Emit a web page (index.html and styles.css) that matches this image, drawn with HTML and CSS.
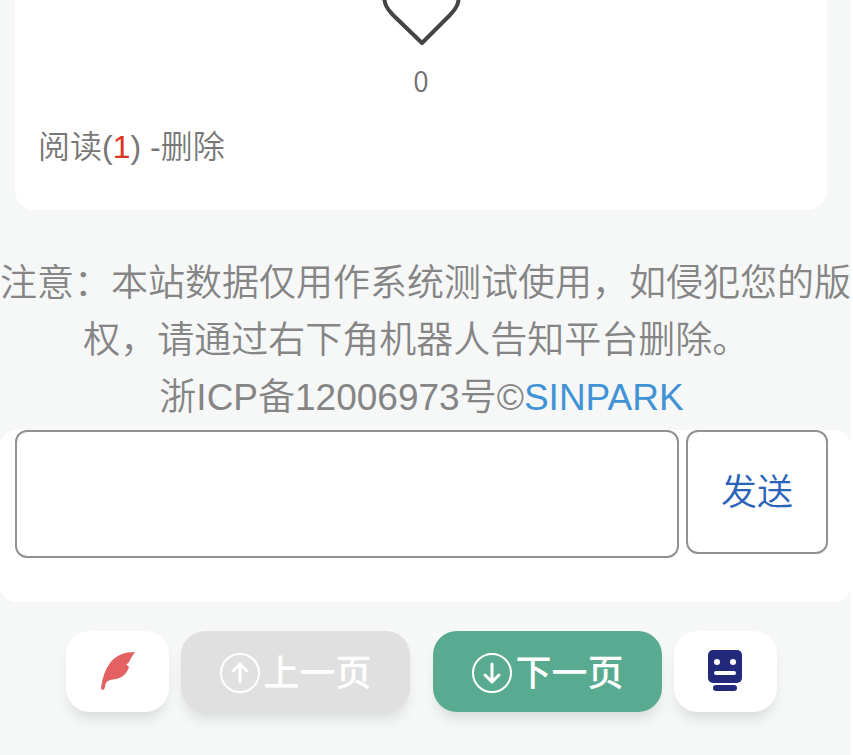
FILE: index.html
```html
<!DOCTYPE html>
<html lang="zh-CN">
<head>
    <meta charset="UTF-8">
    <meta name="viewport" content="width=device-width, initial-scale=1">
    <title>SINPARK</title>
    <link rel="stylesheet" href="styles.css">
</head>
<body>
    <div class="page">
        <div class="card">
            <button class="like" aria-label="点赞">
                <svg class="heart" viewBox="0 0 80 46" fill="none" stroke="#444446" stroke-width="4" stroke-linecap="round" stroke-linejoin="round">
                    <path d="M3 -6 C3 4 6 9 12 15 L41 43 L69 15 C75 9 78 4 78 -6"/>
                </svg>
                <span class="like-count">0</span>
            </button>
            <div class="meta">阅读(<span class="reads">1</span>) -<a href="#">删除</a></div>
        </div>

        <div class="notice">
            注意：本站数据仅用作系统测试使用，如侵犯您的版<br>
            权，请通过右下角机器人告知平台删除。&nbsp;<br>
            浙ICP备12006973号©<a href="#">SINPARK</a>
        </div>

        <form class="reply">
            <textarea class="reply-text" aria-label="回复内容"></textarea>
            <button type="button" class="send">发送</button>
        </form>

        <div class="toolbar">
            <button class="tool" aria-label="写文章">
                <svg width="60" height="60" viewBox="0 0 60 60">
                    <path fill="#e46162" d="M47 10 C37 10 28 13 22 21 C17 28 14 37 13 46 Q13 48 15 48 Q16.5 48 17 45 C17.500 40 20 38 25 37.500 C33 37 39 32 41 25 Q40 23 38 23 Q42 20 43 16 Z"/>
                </svg>
            </button>
            <div class="pager">
                <button class="page-btn" disabled>
                    <svg width="42" height="42" viewBox="0 0 42 42" fill="none" stroke="currentColor" stroke-width="2" stroke-linecap="round">
                        <circle cx="21" cy="22" r="19"/>
                        <path stroke-width="3" stroke-linejoin="round" d="M21 31 V13 M14 20 L21 13 L28 20"/>
                    </svg>
                    <span>上一页</span>
                </button>
                <button class="page-btn next">
                    <svg width="42" height="42" viewBox="0 0 42 42" fill="none" stroke="currentColor" stroke-width="2" stroke-linecap="round">
                        <circle cx="21" cy="22" r="19"/>
                        <path stroke-width="3" stroke-linejoin="round" d="M21 13 V31 M14 24 L21 31 L28 24"/>
                    </svg>
                    <span>下一页</span>
                </button>
            </div>
            <button class="tool" aria-label="机器人">
                <svg width="60" height="60" viewBox="0 0 60 60">
                    <rect x="12" y="8" width="34" height="33" rx="5" fill="#23297a"/>
                    <rect x="17" y="43" width="24" height="6" rx="3" fill="#23297a"/>
                    <circle cx="21" cy="20" r="3" fill="#fff"/>
                    <circle cx="37" cy="20" r="3" fill="#fff"/>
                    <rect x="18" y="29" width="22" height="4" rx="2" fill="#fff"/>
                </svg>
            </button>
        </div>
    </div>
</body>
</html>
```

FILE: styles.css
```css
* { box-sizing: border-box; }
body { margin: 0; background: #fff; font-family: "Liberation Sans", "Noto Sans CJK SC", sans-serif; font-weight: 350; }
button { font-family: inherit; border: none; padding: 0; cursor: pointer; }
a { color: inherit; text-decoration: none; }
svg { display: block; flex: none; }

.page { min-height: 100vh; margin-right: 2px; background: #f6f8f7; }

.card { margin: 0 24px 0 15px; padding: 0 23px; height: 210px; background: #fff; border-radius: 0 0 20px 20px; display: flex; flex-direction: column; }
.like { align-self: center; display: flex; flex-direction: column; align-items: center; background: none; color: #707070; }
.heart { width: 80px; height: 46px; }
.like-count { font-family: "Noto Sans CJK SC", sans-serif; font-size: 28px; font-weight: 350; line-height: 32px; margin-top: 18px; }
.meta { margin-top: 27px; font-size: 32px; line-height: 48px; color: #777; }
.reads { color: #e03224; }

.notice { margin-right: 8px; padding: 45px 0 4px; font-size: 37px; line-height: 57px; color: #858585; text-align: center; white-space: nowrap; }
.notice a { color: #4193d6; }

.reply { display: flex; align-items: flex-start; gap: 7px; padding: 0 23px 44px 15px; background: #fff; border-radius: 16px; }
.reply-text { flex: 1; min-width: 0; height: 128px; padding: 12px; font: inherit; font-size: 37px; border: 2px solid #919191; border-radius: 12px; background: #fff; resize: none; }
.send { width: 142px; height: 124px; padding-bottom: 6px; font-size: 36px; font-weight: 350; color: #2a63b8; border: 2px solid #919191; border-radius: 12px; background: #fff; }

.toolbar { display: flex; justify-content: center; gap: 12px; margin-right: 8px; padding: 29px 0 43px; }
.tool, .page-btn { height: 81px; border-radius: 24px; box-shadow: 0 10px 14px -4px rgba(0, 0, 0, 0.12); display: flex; align-items: center; justify-content: center; }
.tool { width: 103px; background: #fff; }
.pager { display: flex; gap: 23px; }
.page-btn { width: 229px; gap: 2px; font-size: 36px; font-weight: 500; color: #fff; background: #e0e0e0; }
.page-btn span { padding-bottom: 4px; }
.page-btn.next { background: #58ab90; }
```
